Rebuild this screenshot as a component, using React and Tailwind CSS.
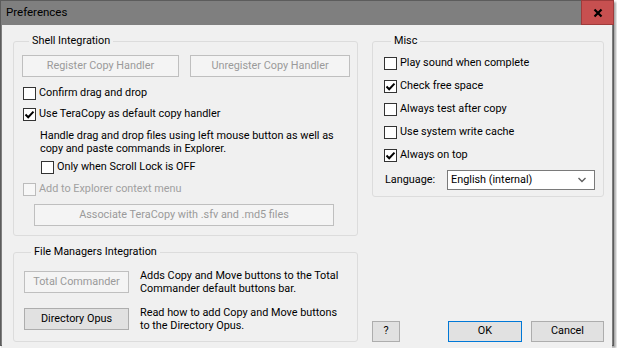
import React from 'react';

function CheckBox({ checked, disabled, children, className = '' }) {
  return (
    <div className={`flex items-center h-[16px] gap-[3px] ${className}`}>
      <span
        className={`w-[13px] h-[13px] border flex items-center justify-center shrink-0 ${
          disabled ? 'border-[#bcbcbc] bg-[#f7f7f7]' : 'border-[#333333] bg-white'
        }`}
      >
        {checked && (
          <svg width="11" height="11" viewBox="0 0 11 11">
            <path d="M1.5 5.5 L4.2 8.2 L9.5 2.6" fill="none" stroke="#000" strokeWidth="2" />
          </svg>
        )}
      </span>
      <span className={disabled ? 'text-[#a0a0a0]' : 'text-black'}>{children}</span>
    </div>
  );
}

function Btn({ disabled, primary, className = '', children }) {
  const tone = disabled
    ? 'bg-[#f4f4f4] border-[#bfbfbf] text-[#9a9a9a]'
    : primary
    ? 'bg-[#e1e1e1] border-[#0078d7] text-black'
    : 'bg-[#e1e1e1] border-[#adadad] text-black';
  return (
    <div className={`border flex items-center justify-center shrink-0 ${tone} ${className}`}>
      {children}
    </div>
  );
}

function Group({ title, className = '', children }) {
  return (
    <fieldset className={`border border-[#dcdcdc] rounded-[3px] ${className}`}>
      <legend className="ml-[7px] px-[3px] leading-[14px] text-black">{title}</legend>
      {children}
    </fieldset>
  );
}

export default function App() {
  return (
    <div className="w-[617px] h-[348px] bg-white font-['Roboto',sans-serif] text-[10.85px] select-none">
      <div className="w-[614px] h-[346px] border border-[#5c5c5c] bg-[#7f7f7f] flex flex-col shadow-[2px_2px_2px_rgba(0,0,0,0.35)]">
        {/* Title bar */}
        <div className="h-[24px] flex items-center justify-between shrink-0">
          <span className="pl-[5px] text-[11.5px] text-black">Preferences</span>
          <div className="w-[33px] h-[25px] -mt-px -mr-px bg-[#c75050] border border-[#9e3b3b] flex items-center justify-center">
            <svg width="10" height="10" viewBox="0 0 10 10">
              <path d="M1.5 1.5 L8.5 8.5 M8.5 1.5 L1.5 8.5" stroke="#000" strokeWidth="2.2" />
            </svg>
          </div>
        </div>

        {/* Body */}
        <div className="flex-1 mx-px mb-px bg-[#f0f0f0] flex gap-[14px] pl-[11px] pr-[8px] pt-[9px] pb-[10px]">
          {/* Left column */}
          <div className="w-[345px] flex flex-col">
            <Group title="Shell Integration" className="pl-[8px] pt-[7px] pb-[9px]">
              <div className="flex gap-[11px]">
                <Btn disabled className="w-[157px] h-[22px]">Register Copy Handler</Btn>
                <Btn disabled className="w-[160px] h-[22px]">Unregister Copy Handler</Btn>
              </div>
              <CheckBox className="mt-[8px] ml-px">Confirm drag and drop</CheckBox>
              <CheckBox checked className="mt-[5px] ml-px">Use TeraCopy as default copy handler</CheckBox>
              <p className="mt-[7px] ml-[18px] leading-[13px] text-black">
                Handle drag and drop files using left mouse button as well as
                <br />
                copy and paste commands in Explorer.
              </p>
              <CheckBox className="mt-[4px] ml-[19px]">Only when Scroll Lock is OFF</CheckBox>
              <CheckBox disabled className="mt-[6px] ml-px">Add to Explorer context menu</CheckBox>
              <Btn disabled className="mt-[7px] ml-[12px] w-[300px] h-[22px]">
                Associate TeraCopy with .sfv and .md5 files
              </Btn>
            </Group>

            <Group title="File Managers Integration" className="mt-[9px] pl-[10px] pt-[10px] pb-[9px]">
              <div className="flex items-center gap-[11px]">
                <Btn disabled className="w-[105px] h-[22px]">Total Commander</Btn>
                <p className="leading-[13px] text-black">
                  Adds Copy and Move buttons to the Total
                  <br />
                  Commander default buttons bar.
                </p>
              </div>
              <div className="flex items-center gap-[11px] mt-[11px]">
                <Btn className="w-[105px] h-[22px]">Directory Opus</Btn>
                <p className="leading-[13px] text-black">
                  Read how to add Copy and Move buttons
                  <br />
                  to the Directory Opus.
                </p>
              </div>
            </Group>
          </div>

          {/* Right column */}
          <div className="w-[232px] flex flex-col justify-between">
            <Group title="Misc" className="pl-[11px] pt-[7px] pb-[6px]">
              <div className="flex flex-col gap-[7px]">
                <CheckBox>Play sound when complete</CheckBox>
                <CheckBox checked>Check free space</CheckBox>
                <CheckBox>Always test after copy</CheckBox>
                <CheckBox>Use system write cache</CheckBox>
                <CheckBox checked>Always on top</CheckBox>
              </div>
              <div className="flex items-center mt-[7px]">
                <span className="w-[63px] pl-px text-black">Language:</span>
                <div className="w-[148px] h-[20px] bg-white border border-[#7a7a7a] flex items-center justify-between pl-[3px] pr-[8px]">
                  <span className="text-black">English (internal)</span>
                  <svg width="8" height="6" viewBox="0 0 8 6">
                    <path d="M0.5 1 L4 4.5 L7.5 1" fill="none" stroke="#606060" strokeWidth="1.4" />
                  </svg>
                </div>
              </div>
            </Group>

            <div className="flex items-center">
              <Btn className="w-[28px] h-[21px]">?</Btn>
              <div className="flex-1" />
              <Btn primary className="w-[74px] h-[21px]">OK</Btn>
              <Btn className="w-[73px] h-[21px] ml-[9px]">Cancel</Btn>
            </div>
          </div>
        </div>
      </div>
    </div>
  );
}
